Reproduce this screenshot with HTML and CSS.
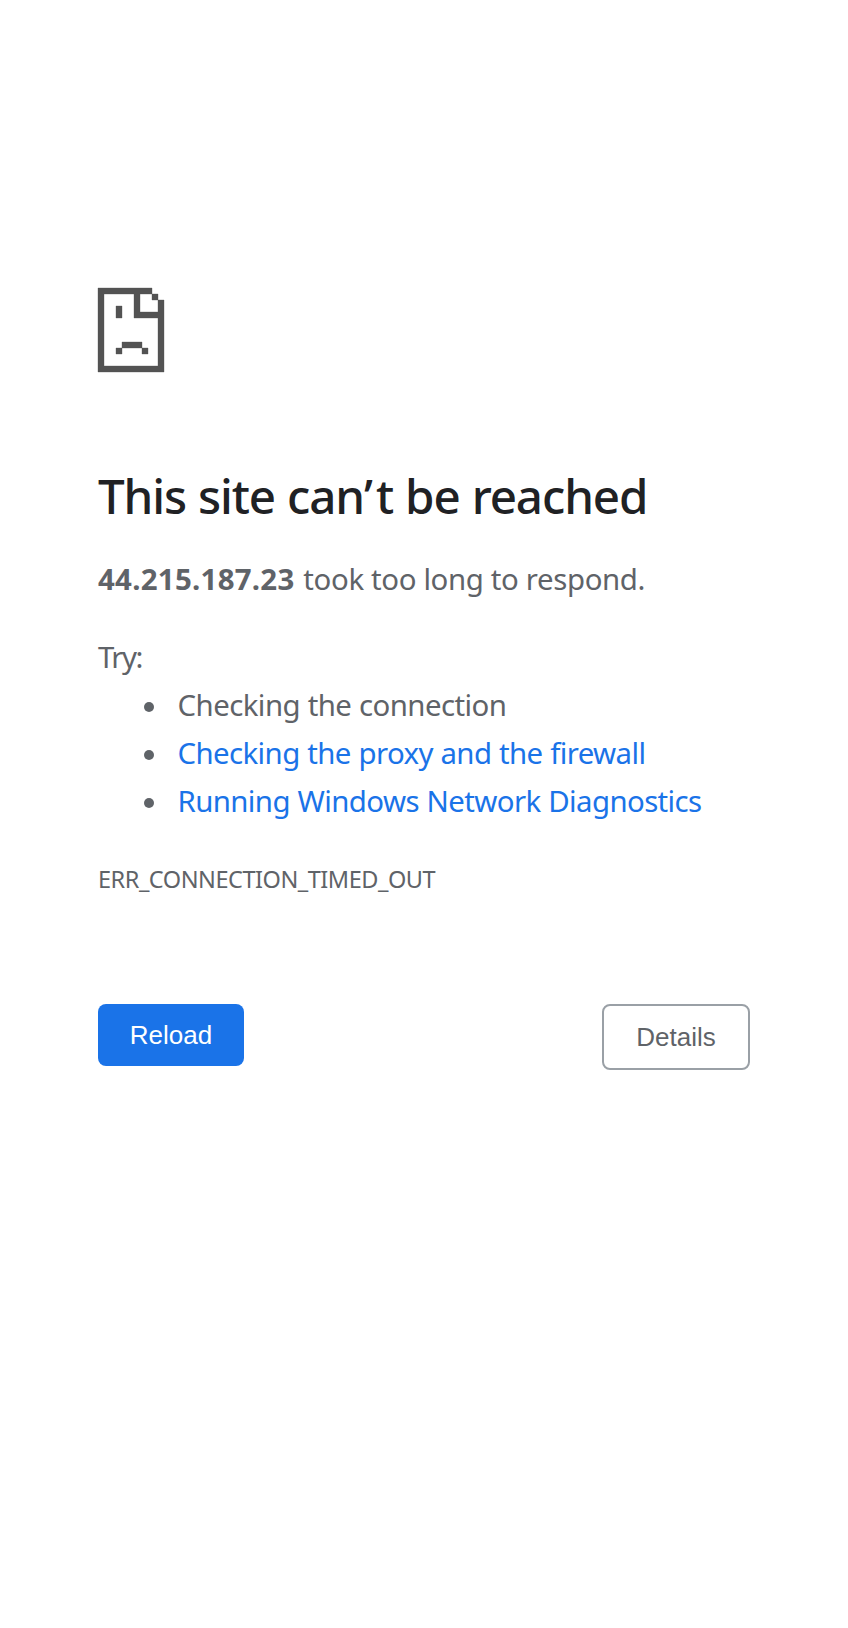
FILE: index.html
```html
<!DOCTYPE html>
<html lang="en">
<head>
<meta charset="utf-8">
<title>44.215.187.23</title>
<link rel="stylesheet" href="styles.css">
</head>
<body>
<main class="page">
  <svg class="icon" viewBox="0 0 66 84" aria-hidden="true">
    <path class="icon-edge" d="M0 0H54V6H60V12H66V84H0ZM6 6V78H60V30H36V6ZM42 6V24H60V12H54V6ZM18 18H24V30H18ZM24 54H44V60H50V66H44V60H24V66H18V60H24Z"/>
  </svg>
  <h1 class="title">This site can<span class="apostrophe">’</span>t be reached</h1>
  <p class="summary"><strong class="host">44.215.187.23</strong><span class="reason"> took too long to respond.</span></p>
  <div class="suggestions">
    <p class="try">Try:</p>
    <ul class="list">
      <li class="connection">Checking the connection</li>
      <li class="proxy"><a>Checking the proxy and the firewall</a></li>
      <li class="diagnostics"><a>Running Windows Network Diagnostics</a></li>
    </ul>
  </div>
  <p class="code">ERR_CONNECTION_TIMED_OUT</p>
  <div class="buttons">
    <button class="btn reload">Reload</button>
    <button class="btn details">Details</button>
  </div>
</main>
</body>
</html>
```
FILE: styles.css
```css
body {
  margin: 0;
  background: #fff;
  color: #5f6368;
  font: 29.4px/48px "Noto Sans", sans-serif;
}
.page {
  width: 652px;
  margin: 0 auto;
  padding-top: 288px;
}
.icon {
  display: block;
  width: 66px;
  height: 84px;
  overflow: visible;
}
.icon-edge {
  fill: #535353;
  fill-rule: evenodd;
  stroke: #535353;
  stroke-opacity: 0.35;
  stroke-width: 1px;
}
p, h1, ul { margin: 0; }
.title {
  margin-top: 91px;
  color: #202124;
  font-size: 47.5px;
  font-weight: 500;
  line-height: 66px;
  letter-spacing: -1.1px;
  word-spacing: 0.8px;
  white-space: nowrap;
}
.apostrophe { letter-spacing: 3px; }
.summary { margin-top: 26px; white-space: nowrap; }
.host { letter-spacing: 0.28px; }
.reason { margin-left: 1.5px; letter-spacing: -0.36px; }
.suggestions { margin-top: 30px; }
.try { letter-spacing: -1.5px; }
.list { padding-left: 79.5px; list-style: none; white-space: nowrap; }
.list li { display: flex; align-items: center; }
.list li::before {
  content: "";
  width: 10px;
  height: 10px;
  margin: 3px 23.5px 0 -33.5px;
  border-radius: 50%;
  background: #5f6368;
}
.list a { color: #1a73e8; }
.connection { letter-spacing: -0.55px; word-spacing: 0.5px; }
.proxy { letter-spacing: -0.6px; word-spacing: 0.6px; }
.diagnostics { letter-spacing: -0.6px; word-spacing: 0.6px; }
.code { margin-top: 30px; font-size: 23.5px; letter-spacing: -0.47px; }
.buttons {
  display: flex;
  justify-content: space-between;
  align-items: flex-start;
  margin-top: 101px;
}
.btn {
  box-sizing: border-box;
  border: 0;
  border-radius: 8px;
  padding: 0;
  font: 26px/30px "Liberation Sans", Arial, sans-serif;
}
.reload {
  width: 146px;
  height: 62px;
  background: #1a73e8;
  color: #fff;
}
.details {
  width: 148px;
  height: 66px;
  border: 2px solid #9aa0a6;
  background: #fff;
  color: #5f6368;
}
```
